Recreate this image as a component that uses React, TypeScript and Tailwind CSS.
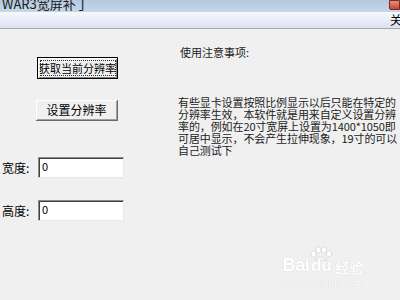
import React from "react";

const font = { fontFamily: '"Noto Sans CJK SC", "Liberation Sans", sans-serif' };

function Watermark() {
  return (
    <div className="absolute left-[282px] top-[246px] flex flex-col items-center text-white select-none" style={font}>
      <div className="flex items-end leading-none">
        <span className="text-[18px] font-bold tracking-tight [text-shadow:0_0_1px_#c8c8c8]" style={{ fontFamily: '"Liberation Sans", sans-serif' }}>Bai</span>
        <div className="flex flex-col items-center">
          <svg width="24" height="15" viewBox="0 0 24 15">
            <g fill="#ffffff" stroke="#d0d0d0" strokeWidth="0.7">
              <ellipse cx="4.5" cy="8" rx="2.6" ry="3.2" />
              <ellipse cx="9.5" cy="4" rx="2.6" ry="3.2" />
              <ellipse cx="15" cy="4" rx="2.6" ry="3.2" />
              <ellipse cx="20" cy="8" rx="2.6" ry="3.2" />
              <path d="M6 14 Q12 8 18 14 Z" />
            </g>
          </svg>
          <span className="-mt-[4px] text-[17px] font-bold leading-none [text-shadow:0_0_1px_#c8c8c8]" style={{ fontFamily: '"Liberation Sans", sans-serif' }}>du</span>
        </div>
        <span className="ml-[2px] text-[14px] font-bold leading-none [text-shadow:0_0_1px_#c8c8c8]">经验</span>
      </div>
      <div className="mt-[3px] text-[11px] leading-none [text-shadow:0_0_1px_#c8c8c8]" style={{ fontFamily: '"Liberation Serif", serif' }}>
        jingyan.baidu.com
      </div>
    </div>
  );
}

function Field({ label }: { label: string }) {
  return (
    <div className="flex items-center">
      <span className="w-[38px] pl-[2px] text-[12px] leading-[14px]">{label}</span>
      <div className="h-[21px] w-[86px] border-t border-l border-[#8a8a8a] border-b border-r border-b-[#e8e8e8] border-r-[#e8e8e8] bg-white pl-[3px] pt-[2px] text-[11px] leading-[12px] shadow-[inset_1px_1px_0_#404040]">
        0
      </div>
    </div>
  );
}

export default function App() {
  return (
    <div className="relative flex h-[300px] w-[400px] flex-col overflow-hidden bg-[#f0f0f0] text-black" style={font}>
      {/* title bar */}
      <div className="flex h-[12px] shrink-0 items-end justify-between overflow-hidden bg-gradient-to-b from-[#b3c8df] to-[#c7d7e9] pl-[2px]">
        <span className="mb-[1px] text-[13px] leading-[14px] text-[#1a1a1a]">WAR3宽屏补丁</span>
        <div className="mb-[2px] h-[10px] w-[11px] self-start rounded-bl-[2px] border border-[#7a2a1c] bg-gradient-to-b from-[#e0907a] to-[#c4452c]" />
      </div>
      {/* menu bar */}
      <div className="flex h-[17px] shrink-0 items-start justify-end overflow-hidden border-b border-[#a8a8a8] bg-gradient-to-b from-[#f6f8fc] to-[#dce2f0] pt-[1px]">
        <span className="mr-[-2px] text-[12px] leading-[14px]">关</span>
      </div>

      {/* body */}
      <div className="flex flex-1">
        {/* left column */}
        <div className="flex w-[178px] shrink-0 flex-col">
          <div className="ml-[37px] mt-[28px] flex h-[22px] w-[81px] items-center justify-center border border-black bg-[#f0f0f0] shadow-[inset_1px_1px_0_#ffffff,inset_-1px_-1px_0_#808080]">
            <span className="flex h-[16px] w-[76px] items-center justify-center whitespace-nowrap border border-dotted border-[#303030] text-[11px] leading-none">获取当前分辨率</span>
          </div>
          <div className="ml-[36px] mt-[21px] flex h-[21px] w-[82px] items-center justify-center border-r border-b border-[#6a6a6a] bg-[#f0f0f0] shadow-[inset_1px_1px_0_#ffffff,inset_-1px_-1px_0_#a0a0a0]">
            <span className="whitespace-nowrap text-[12px] leading-none">设置分辨率</span>
          </div>
          <div className="mt-[36px] flex flex-col gap-[22px]">
            <Field label="宽度:" />
            <Field label="高度:" />
          </div>
        </div>

        {/* right column */}
        <div className="flex flex-1 flex-col text-[#1c1c1c]">
          <div className="ml-[2px] mt-[17px] text-[11px] leading-[13px]">使用注意事项:</div>
          <p className="mt-[37px] w-[224px] break-all text-[11px] leading-[12px] tracking-[-0.1px]">
            有些显卡设置按照比例显示以后只能在特定的分辨率生效，本软件就是用来自定义设置分辨率的，例如在20寸宽屏上设置为1400*1050即可居中显示，不会产生拉伸现象，19寸的可以自己测试下
          </p>
        </div>
      </div>

      <Watermark />
    </div>
  );
}
